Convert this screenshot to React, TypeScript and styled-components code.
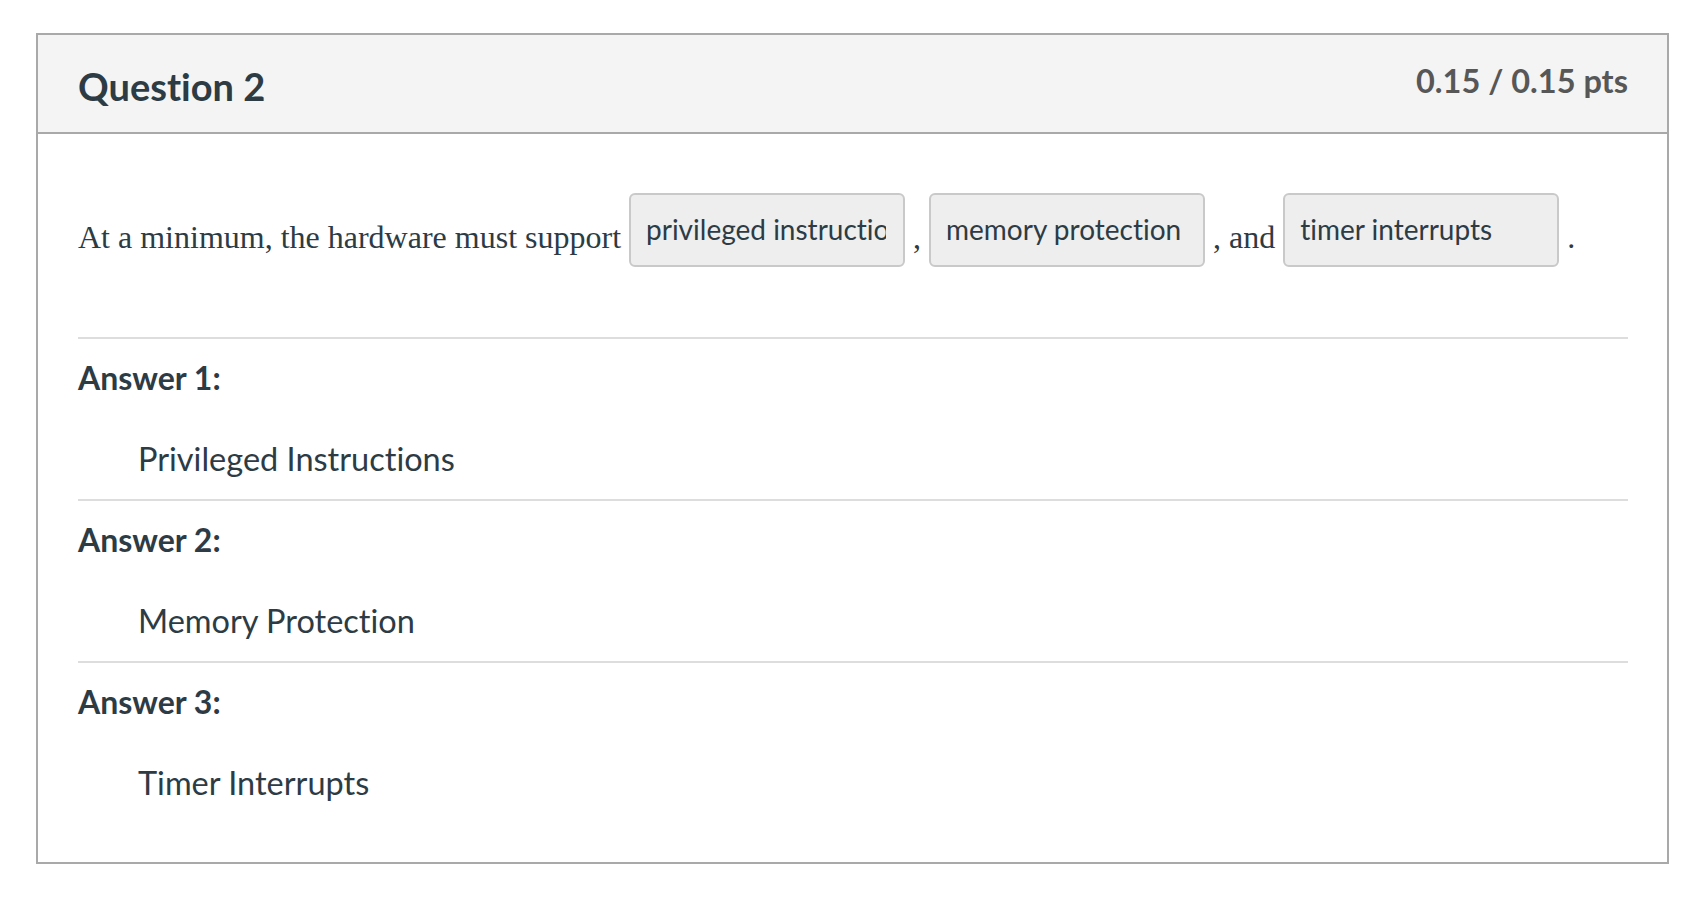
import React from "react";
import styled, { createGlobalStyle } from "styled-components";

const GlobalStyle = createGlobalStyle`
  html, body {
    margin: 0;
    padding: 0;
    background: #ffffff;
  }
  body {
    font-family: Lato, "Open Sans", "Liberation Sans", sans-serif;
    color: #2d3b45;
    font-variant-ligatures: none;
    font-feature-settings: "liga" 0, "clig" 0;
  }
`;

const Page = styled.div`
  padding: 33px 0 38px 36px;
`;

const Card = styled.section`
  width: 1633px;
  box-sizing: border-box;
  border: 2px solid #a9a9a9;
  background: #ffffff;
`;

const Header = styled.header`
  display: flex;
  justify-content: space-between;
  align-items: flex-start;
  box-sizing: border-box;
  height: 99px;
  padding: 26px 39px 0 40px;
  background: #f4f4f4;
  border-bottom: 2px solid #a9a9a9;
`;

const Title = styled.h2`
  margin: 0;
  padding-top: 3px;
  font-family: Lato, "Liberation Sans", sans-serif;
  font-weight: 700;
  font-size: 38px;
  line-height: 1.2;
  color: #2d3b45;
  font-variant-ligatures: none;
`;

const Points = styled.div`
  font-family: Lato, "Liberation Sans", sans-serif;
  font-weight: 700;
  font-size: 32.5px;
  line-height: 1.2;
  color: #575757;
`;

const Body = styled.div`
  padding: 59px 39px 39px 40px;
`;

const QuestionLine = styled.div`
  display: flex;
  align-items: flex-start;
  gap: 8px;
  margin-bottom: 70px;
`;

const Serif = styled.span`
  margin-top: 26px;
  font-family: "Liberation Serif", "Times New Roman", serif;
  font-size: 32px;
  line-height: 36px;
  color: #2d3b45;
  white-space: pre;
`;

const Blank = styled.span`
  display: block;
  flex: none;
  width: 276px;
  height: 74px;
  box-sizing: border-box;
  padding: 18px 17px 0 15px;
  border: 2px solid #c9c9c9;
  border-radius: 6px;
  background: #eeeeee;
  font-family: Lato, "Liberation Sans", sans-serif;
  font-size: 28px;
  line-height: 1.2;
  color: #2d3b45;
`;

const BlankText = styled.span`
  display: block;
  overflow: hidden;
  white-space: nowrap;
`;

const AnswerBlock = styled.div`
  border-top: 2px solid #dddddd;
  padding: 20px 0 21px 0;
`;

const AnswerLabel = styled.div`
  font-family: Lato, "Liberation Sans", sans-serif;
  font-weight: 700;
  font-size: 32px;
  line-height: 38px;
  color: #2d3b45;
`;

const AnswerValue = styled.div`
  margin-top: 43px;
  padding-left: 60px;
  font-family: Lato, "Liberation Sans", sans-serif;
  font-weight: 400;
  font-size: 32.5px;
  line-height: 38px;
  color: #2d3b45;
`;

const answers = [
  { label: "Answer 1:", value: "Privileged Instructions" },
  { label: "Answer 2:", value: "Memory Protection" },
  { label: "Answer 3:", value: "Timer Interrupts" },
];

export default function App() {
  return (
    <>
      <GlobalStyle />
      <Page>
        <Card>
          <Header>
            <Title>Question 2</Title>
            <Points>0.15 / 0.15 pts</Points>
          </Header>
          <Body>
            <QuestionLine>
              <Serif>At a minimum, the hardware must support</Serif>
              <Blank>
                <BlankText>privileged instructions</BlankText>
              </Blank>
              <Serif>,</Serif>
              <Blank>
                <BlankText>memory protection</BlankText>
              </Blank>
              <Serif>, and</Serif>
              <Blank>
                <BlankText>timer interrupts</BlankText>
              </Blank>
              <Serif>.</Serif>
            </QuestionLine>
            {answers.map((a) => (
              <AnswerBlock key={a.label}>
                <AnswerLabel>{a.label}</AnswerLabel>
                <AnswerValue>{a.value}</AnswerValue>
              </AnswerBlock>
            ))}
          </Body>
        </Card>
      </Page>
    </>
  );
}
